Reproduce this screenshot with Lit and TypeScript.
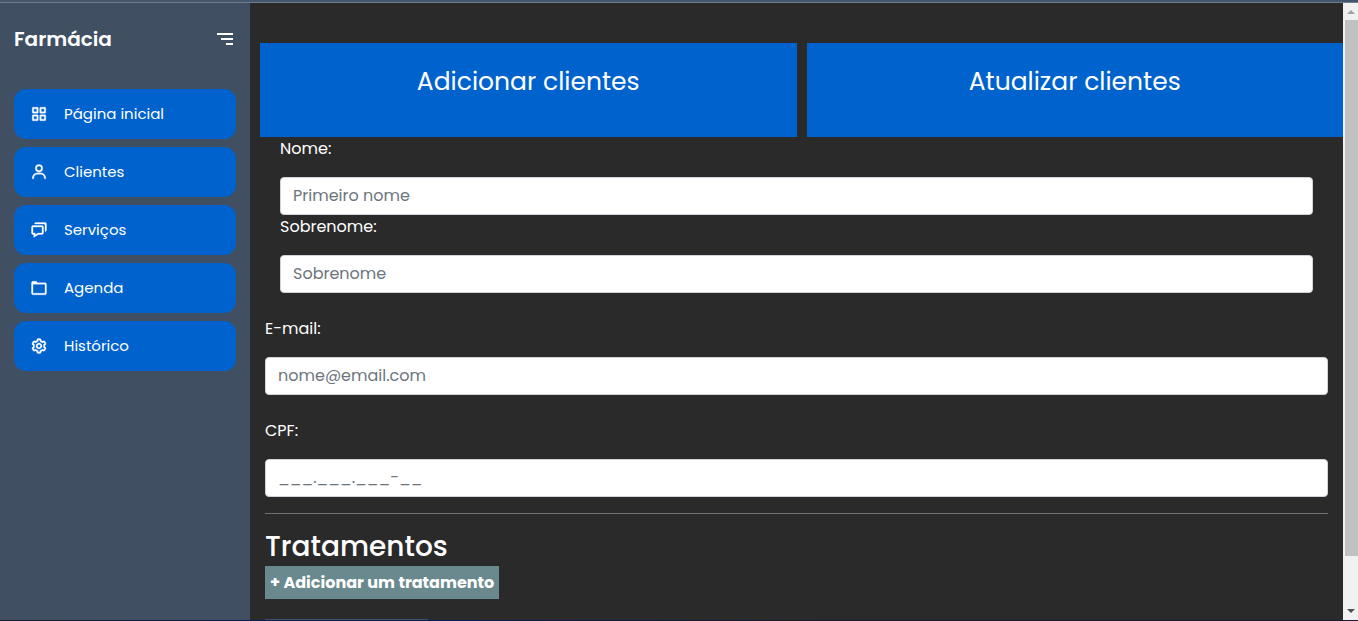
import { LitElement, html, css, svg } from "lit";
import { customElement } from "lit/decorators.js";

const icons: Record<string, string[]> = {
  menu: ["M4 6h16v2H4z", "M8 11h12v2H8z", "M13 16h7v2h-7z"],
  grid: [
    "M10 3H4a1 1 0 0 0-1 1v6a1 1 0 0 0 1 1h6a1 1 0 0 0 1-1V4a1 1 0 0 0-1-1zM9 9H5V5h4z",
    "M20 3h-6a1 1 0 0 0-1 1v6a1 1 0 0 0 1 1h6a1 1 0 0 0 1-1V4a1 1 0 0 0-1-1zM19 9h-4V5h4z",
    "M10 13H4a1 1 0 0 0-1 1v6a1 1 0 0 0 1 1h6a1 1 0 0 0 1-1v-6a1 1 0 0 0-1-1zM9 19H5v-4h4z",
    "M20 13h-6a1 1 0 0 0-1 1v6a1 1 0 0 0 1 1h6a1 1 0 0 0 1-1v-6a1 1 0 0 0-1-1zM19 19h-4v-4h4z",
  ],
  user: [
    "M12 2a5 5 0 1 0 5 5 5 5 0 0 0-5-5zm0 8a3 3 0 1 1 3-3 3 3 0 0 1-3 3zm9 11v-1a7 7 0 0 0-7-7h-4a7 7 0 0 0-7 7v1h2v-1a5 5 0 0 1 5-5h4a5 5 0 0 1 5 5v1z",
  ],
  chat: [
    "M5 18v3.766l1.515-.909L11.277 18H16c1.103 0 2-.897 2-2V8c0-1.103-.897-2-2-2H4c-1.103 0-2 .897-2 2v8c0 1.103.897 2 2 2h1zM4 8h12v8h-5.277L7 18.234V16H4V8z",
    "M20 2H8c-1.103 0-2 .897-2 2h12c1.103 0 2 .897 2 2v8c1.103 0 2-.897 2-2V4c0-1.103-.897-2-2-2z",
  ],
  folder: [
    "M20 5h-9.586L8.707 3.293A.997.997 0 0 0 8 3H4c-1.103 0-2 .897-2 2v14c0 1.103.897 2 2 2h16c1.103 0 2-.897 2-2V7c0-1.103-.897-2-2-2zM4 19V7h16l.002 12H4z",
  ],
  cog: [
    "M12 16c2.206 0 4-1.794 4-4s-1.794-4-4-4-4 1.794-4 4 1.794 4 4 4zm0-6c1.084 0 2 .916 2 2s-.916 2-2 2-2-.916-2-2 .916-2 2-2z",
    "m2.845 16.136 1 1.73c.531.917 1.809 1.261 2.73.73l.529-.306A8.1 8.1 0 0 0 9 19.402V20c0 1.103.897 2 2 2h2c1.103 0 2-.897 2-2v-.598a8.132 8.132 0 0 0 1.896-1.111l.529.306c.923.53 2.198.188 2.731-.731l.999-1.729a2.001 2.001 0 0 0-.731-2.732l-.505-.292a7.718 7.718 0 0 0 0-2.224l.505-.292a2.002 2.002 0 0 0 .731-2.732l-.999-1.729c-.531-.92-1.808-1.265-2.731-.732l-.529.306A8.1 8.1 0 0 0 15 4.598V4c0-1.103-.897-2-2-2h-2c-1.103 0-2 .897-2 2v.598a8.132 8.132 0 0 0-1.896 1.111l-.529-.306c-.924-.531-2.2-.187-2.731.732l-.999 1.729a2.001 2.001 0 0 0 .731 2.732l.505.292a7.683 7.683 0 0 0 0 2.223l-.505.292a2.003 2.003 0 0 0-.731 2.733zm3.326-2.758A5.703 5.703 0 0 1 6 12c0-.462.058-.926.17-1.378a.999.999 0 0 0-.47-1.108l-1.123-.65.998-1.729 1.145.662a.997.997 0 0 0 1.188-.142 6.071 6.071 0 0 1 2.384-1.399A1 1 0 0 0 11 5.3V4h2v1.3a1 1 0 0 0 .708.956 6.083 6.083 0 0 1 2.384 1.399.999.999 0 0 0 1.188.142l1.144-.661 1 1.729-1.124.649a1 1 0 0 0-.47 1.108c.112.452.17.916.17 1.378 0 .461-.058.925-.171 1.378a1 1 0 0 0 .471 1.108l1.123.649-.998 1.729-1.145-.661a.996.996 0 0 0-1.188.142 6.071 6.071 0 0 1-2.384 1.399A1 1 0 0 0 13 18.7l.002 1.3H11v-1.3a1 1 0 0 0-.708-.956 6.083 6.083 0 0 1-2.384-1.399.992.992 0 0 0-1.188-.141l-1.144.662-1-1.729 1.124-.651a1 1 0 0 0 .471-1.108z",
  ],
};

const icon = (name: string) => html`<svg class="icon" viewBox="0 0 24 24" aria-hidden="true">
  ${icons[name].map((d) => svg`<path d=${d}></path>`)}
</svg>`;

const links = [
  { icon: "grid", text: "Página inicial" },
  { icon: "user", text: "Clientes" },
  { icon: "chat", text: "Serviços" },
  { icon: "folder", text: "Agenda" },
  { icon: "cog", text: "Histórico" },
];

@customElement("app-sidebar")
class AppSidebar extends LitElement {
  static styles = css`
    :host {
      display: block;
      box-sizing: border-box;
      padding: 6px 13px 6px 14px;
      background: #405062;
      color: #fff;
    }
    .head {
      display: flex;
      align-items: center;
      justify-content: space-between;
      height: 60px;
      margin-bottom: 20px;
    }
    .brand {
      font-size: 20px;
      font-weight: 600;
    }
    .toggle {
      display: flex;
      padding: 0;
      border: 0;
      background: none;
      color: inherit;
    }
    .icon {
      width: 18px;
      height: 18px;
      fill: currentColor;
      stroke: currentColor;
      stroke-width: 0.4;
    }
    .toggle .icon {
      width: 24px;
      height: 24px;
      stroke: none;
    }
    .list {
      display: grid;
      gap: 8px;
      margin: 0;
      padding: 0 1px 0 0;
      list-style: none;
    }
    .link {
      display: flex;
      align-items: center;
      height: 50px;
      border-radius: 12px;
      background: #0062cc;
      color: #fff;
      font-size: 15px;
      line-height: 22px;
      text-decoration: none;
    }
    .slot {
      display: flex;
      justify-content: center;
      width: 50px;
    }
  `;

  render() {
    return html`
      <div class="head">
        <div class="brand">Farmácia</div>
        <button class="toggle" type="button" aria-label="Menu">${icon("menu")}</button>
      </div>
      <nav>
        <ul class="list">
          ${links.map(
            (l) => html`<li>
              <a class="link" href="#"><span class="slot">${icon(l.icon)}</span>${l.text}</a>
            </li>`
          )}
        </ul>
      </nav>
    `;
  }
}

@customElement("client-form")
class ClientForm extends LitElement {
  static styles = css`
    :host {
      display: block;
      padding: 0 15px;
    }
    .names {
      padding: 0 15px;
      margin-bottom: 24px;
    }
    .field {
      display: grid;
      gap: 16px;
    }
    .spaced {
      margin-bottom: 24px;
    }
    .label {
      font-size: 16px;
      line-height: 24px;
    }
    .input {
      box-sizing: border-box;
      width: 100%;
      height: 38px;
      padding: 5px 12px 7px;
      border: 1px solid #ced4da;
      border-radius: 4px;
      background: #fff;
      color: #495057;
      font-family: inherit;
      font-size: 16px;
      line-height: 24px;
    }
    .input::placeholder {
      color: #6c757d;
      opacity: 1;
    }
    .rule {
      margin: 16px 0;
      border: 0;
      border-top: 1px solid #6f6f6f;
    }
    .title {
      margin: 0 0 2px;
      font-size: 28px;
      font-weight: 500;
      line-height: 34px;
    }
    .add {
      display: block;
      height: 33px;
      padding: 0 5px;
      border: 0;
      background: #69898f;
      color: #fff;
      font-family: inherit;
      font-size: 16px;
      font-weight: 700;
    }
    .next {
      width: 163px;
      height: 38px;
      margin-top: 20px;
      background: #405062;
    }
  `;

  private field(id: string, label: string, placeholder: string, spaced = false, type = "text") {
    return html`<div class="field ${spaced ? "spaced" : ""}">
      <label class="label" for=${id}>${label}</label>
      <input class="input" id=${id} type=${type} placeholder=${placeholder} />
    </div>`;
  }

  render() {
    return html`<form>
      <div class="names">
        ${this.field("nome", "Nome:", "Primeiro nome")}
        ${this.field("sobrenome", "Sobrenome:", "Sobrenome")}
      </div>
      ${this.field("email", "E-mail:", "nome@email.com", true, "email")}
      ${this.field("cpf", "CPF:", "___.___.___-__")}
      <hr class="rule" />
      <h2 class="title">Tratamentos</h2>
      <button class="add" type="button">+ Adicionar um tratamento</button>
      <div class="next"></div>
    </form>`;
  }
}

@customElement("app-root")
class AppRoot extends LitElement {
  static styles = css`
    :host {
      display: grid;
      grid-template-rows: auto minmax(0, 1fr) auto;
      height: 100vh;
      overflow: hidden;
      font-family: Poppins, Inter, sans-serif;
      color: #fff;
      background: #2a2a2a;
    }
    .topline {
      height: 2px;
      border-bottom: 1px solid #737b8e;
      background: #44566c;
    }
    .bottomline {
      height: 1px;
      background: linear-gradient(90deg, #1b1e2c, #0d1d55 20%, #0d1d55 35%, #1b1b2b 60%);
    }
    .frame {
      display: grid;
      grid-template-columns: 250px minmax(0, 1fr) 15px;
      min-height: 0;
    }
    .content {
      min-height: 0;
      overflow: hidden;
      padding-top: 40px;
    }
    .tabs {
      display: grid;
      grid-template-columns: 1fr 1fr;
      gap: 10px;
      padding-left: 10px;
    }
    .tab {
      height: 94px;
      padding: 0 0 16px;
      border: 0;
      background: #0062cc;
      color: #fff;
      font-family: inherit;
      font-size: 25px;
    }
    .scrollbar {
      display: flex;
      flex-direction: column;
      background: #f1f1f1;
    }
    .arrow {
      width: 15px;
      height: 17px;
    }
    .up {
      fill: #a3a3a3;
    }
    .down {
      fill: #505050;
    }
    .track {
      display: flex;
      flex: 1;
      flex-direction: column;
    }
    .thumb {
      flex-basis: 92%;
      margin-left: 2px;
      background: #c1c1c1;
    }
  `;

  render() {
    return html`
      <div class="topline"></div>
      <div class="frame">
        <app-sidebar></app-sidebar>
        <main class="content">
          <div class="tabs">
            <button class="tab" type="button">Adicionar clientes</button>
            <button class="tab" type="button">Atualizar clientes</button>
          </div>
          <client-form></client-form>
        </main>
        <div class="scrollbar" aria-hidden="true">
          <svg class="arrow up" viewBox="0 0 15 17"><path d="M4 11 8 7l4 4z"></path></svg>
          <div class="track"><div class="thumb"></div></div>
          <svg class="arrow down" viewBox="0 0 15 17"><path d="M4 6h8l-4 4z"></path></svg>
        </div>
      </div>
      <div class="bottomline"></div>
    `;
  }
}
